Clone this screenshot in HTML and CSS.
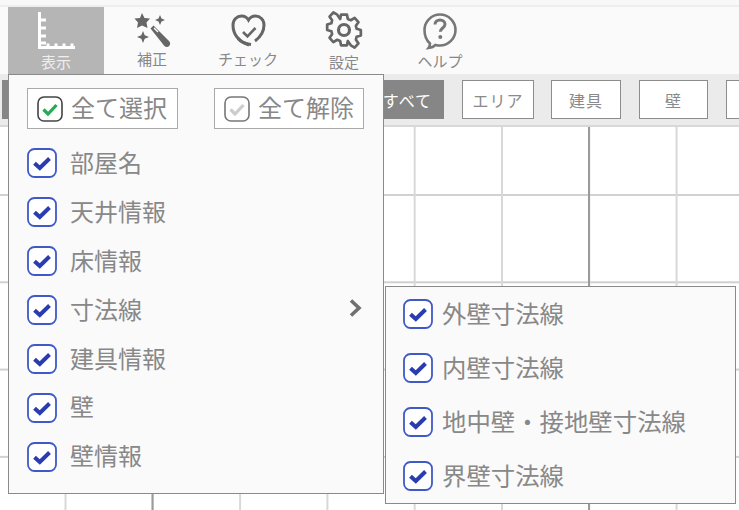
FILE: index.html
```html
<!DOCTYPE html>
<html lang="ja">
<head>
<meta charset="utf-8">
<title>表示</title>
<link rel="stylesheet" href="styles.css">
</head>
<body>
<svg class="defs" width="0" height="0" aria-hidden="true">
  <symbol id="chk" viewBox="0 0 30 30">
    <rect x="1" y="1" width="28" height="28" rx="6.5" fill="#fff" stroke="currentColor" stroke-width="1.8"/>
    <path d="M7.500 15.200 12.800 20 22.500 10.500" fill="none" stroke="#2a3db0" stroke-width="4" stroke-linejoin="miter"/>
  </symbol>
</svg>
<div class="app">
  <div class="topline"></div>
  <nav class="toolbar">
    <div class="tool active">
      <svg class="icon" width="48" height="44" viewBox="0 0 48 44"><path d="M7.500 3v35.500H43M7.500 11H14M7.500 19H14M7.500 27H14M7.500 34H14M16 38.500v-4M24 38.500v-4M32 38.500v-4M40 38.500v-4" fill="none" stroke="#fff" stroke-width="3"/></svg>
      <span class="label">表示</span>
    </div>
    <div class="tool">
      <svg class="icon" width="48" height="42" viewBox="0 0 48 42" fill="#666"><path d="M14 3l2.500 5 5.500.5-3.500 4 1 5.500-5.500-2.500L9 18l1-5.500-3.500-4L12 8z"/><path d="M32 5l1.500 3.500L37 10l-3.500 1.500L32 15l-1.500-3.500L27 10l3.500-1.500z"/><path d="M15 21l1.700 4.300L21 27l-4.300 1.700L15 33l-1.700-4.300L9 27l4.300-1.700z"/><path d="M22.500 18.500l3-3L41 31c1.500 1.500 1.500 3.500.2 5-1.500 1.500-3.500 1.300-5-.2z"/><path d="M25.500 18.500l1-1 4 4-1 1z" fill="#fafafa"/></svg>
      <span class="label">補正</span>
    </div>
    <div class="tool">
      <svg class="icon" width="48" height="42" viewBox="0 0 48 42" fill="none" stroke="#666" stroke-width="3"><path d="M25 35C14 31 9 24 9 15 9 9.500 13 6 17.500 6c3 0 5.500 1.500 7 4 1.500-2.500 4-4 7-4C36 6 40 9.500 40 15c0 6.500-3 11.500-9 16"/><path d="M14 28.500c3 3.500 8 5.500 13 6" /><path d="M19 22l4.500 4.500L31.500 18" stroke-width="2.600"/></svg>
      <span class="label">チェック</span>
    </div>
    <div class="tool tool-low">
      <svg class="icon" width="48" height="42" viewBox="0 0 48 42" fill="none" stroke="#666" stroke-width="3.200" stroke-linejoin="round"><path d="M20.500 4h7l1 5 3.500 1.500 4.500-2.700 4.500 5-3 4.200.8 3.500 5 1.500v6.500l-5 1.500-.8 3.500 3 4.200-4.500 5-4.500-2.700L28.500 35l-1 5h-7l-1-5-3.500-1.500-4.500 2.700-4.500-5 3-4.200-.8-3.500-5-1.500v-6.500l5-1.500.8-3.500-3-4.200 4.500-5 4.500 2.700L19.500 9z" transform="translate(3.600 1.300) scale(.85)"/><circle cx="24" cy="20" r="5.500"/></svg>
      <span class="label">設定</span>
    </div>
    <div class="tool">
      <svg class="icon" width="48" height="44" viewBox="0 0 48 44" fill="none" stroke="#777" stroke-width="2.600"><path d="M14 33.500C10.500 30.500 8.500 25.500 8.500 20 8.500 11.500 15.500 4.500 24 4.500S39.500 11.500 39.500 20 32.500 35.500 24 35.500c-1.500 0-3-.2-4.500-.6-1.500 1.700-4 2.800-7 3.100 1-1.300 1.500-2.800 1.500-4.500z"/><path d="M19 14.500c0-2.700 2.300-4.500 5-4.500s5 1.800 5 4.300c0 3.700-4.700 3.700-4.700 7.500" stroke-width="3"/><circle cx="24.300" cy="27" r="2" fill="#777" stroke="none"/></svg>
      <span class="label">ヘルプ</span>
    </div>
  </nav>
  <div class="filters">
    <span class="chip chip-all">すべて</span>
    <span class="chip chip-area">エリア</span>
    <span class="chip chip-fix">建具</span>
    <span class="chip chip-wall">壁</span>
    <span class="chip chip-more"></span>
  </div>
  <div class="canvas"></div>
</div>

<div class="menu">
  <div class="menu-actions">
    <div class="action">
      <svg class="mini" width="26" height="26" viewBox="0 0 26 26"><rect x="1" y="1" width="24" height="24" rx="6" fill="#fff" stroke="#444" stroke-width="1.600"/><path d="M6.500 13.500 11 18l8.500-9" fill="none" stroke="#22ab50" stroke-width="3.200"/></svg>
      <span>全て選択</span>
    </div>
    <div class="action">
      <svg class="mini" width="26" height="26" viewBox="0 0 26 26"><rect x="1" y="1" width="24" height="24" rx="6" fill="#fff" stroke="#777" stroke-width="1.600"/><path d="M6.500 13.500 11 18l8.500-9" fill="none" stroke="#ccc" stroke-width="3.200"/></svg>
      <span>全て解除</span>
    </div>
  </div>
  <ul class="list">
    <li class="row"><svg class="box"><use href="#chk"/></svg>部屋名</li>
    <li class="row"><svg class="box"><use href="#chk"/></svg>天井情報</li>
    <li class="row"><svg class="box"><use href="#chk"/></svg>床情報</li>
    <li class="row"><svg class="box"><use href="#chk"/></svg>寸法線
      <svg class="chevron" width="14" height="20" viewBox="0 0 14 20"><path d="M2 2.500 10 10l-8 7.500" fill="none" stroke="#707070" stroke-width="3.600"/></svg>
    </li>
    <li class="row"><svg class="box"><use href="#chk"/></svg>建具情報</li>
    <li class="row"><svg class="box"><use href="#chk"/></svg>壁</li>
    <li class="row"><svg class="box"><use href="#chk"/></svg>壁情報</li>
  </ul>
</div>

<ul class="submenu">
  <li class="subrow"><svg class="box"><use href="#chk"/></svg>外壁寸法線</li>
  <li class="subrow"><svg class="box"><use href="#chk"/></svg>内壁寸法線</li>
  <li class="subrow"><svg class="box"><use href="#chk"/></svg>地中壁・接地壁寸法線</li>
  <li class="subrow"><svg class="box"><use href="#chk"/></svg>界壁寸法線</li>
</ul>
</body>
</html>
```
FILE: styles.css
```css
* { box-sizing: border-box; }
html, body { margin: 0; height: 100%; overflow: hidden; }
body {
  position: relative;
  background: #fff;
  font-family: "Noto Sans CJK JP", "Noto Sans", sans-serif;
  color: #888;
}
.defs { position: absolute; }
.app { display: flex; flex-direction: column; height: 510px; }
.topline { height: 7px; background: #f8f8f8; border-bottom: 2px solid #eeeeee; }

.toolbar { display: flex; height: 67px; padding-left: 8px; background: #fafafa; }
.tool {
  width: 96px;
  display: flex;
  flex-direction: column;
  align-items: center;
  color: #888;
}
.tool .icon { display: block; flex: none; margin-top: 3px; }
.tool .label { font-size: 15px; line-height: 18px; margin-top: -2px; white-space: nowrap; }
.tool.active { background: #b5b5b5; color: #eee; }
.tool.active .icon { margin-top: 2px; }
.tool.active .label { margin-top: 0; }
.tool-low .label { margin-top: 1px; }

.filters {
  display: flex;
  height: 53px;
  padding: 6px 0 0 2px;
  background: #ebebeb;
  border-bottom: 2px solid #d8d8d8;
  overflow: hidden;
}
.chip {
  height: 39px;
  flex: none;
  display: flex;
  align-items: center;
  justify-content: center;
  font-size: 16px;
  background: #fff;
  border: 1px solid #8c8c8c;
  color: #8a8a8a;
  letter-spacing: 1px;
}
.chip-all { width: 442px; justify-content: flex-end; padding-right: 11px; background: #868686; border-color: #868686; color: #fff; }
.chip-area { width: 72px; margin-left: 18px; }
.chip-fix { width: 70px; margin-left: 17px; }
.chip-wall { width: 69px; margin-left: 18px; }
.chip-more { width: 40px; margin-left: 18px; }

.canvas {
  flex: 1;
  background-color: #fff;
  background-image:
    linear-gradient(90deg, #9a9a9a 2px, transparent 2px),
    linear-gradient(90deg, #d8d8d8 2px, transparent 2px),
    linear-gradient(180deg, #d0d0d0 2px, transparent 2px);
  background-size: 436.500px 100%, 87.300px 100%, 100% 87.300px;
  background-position: 151.500px 0, 64.500px 0, 0 67px;
}

.menu {
  position: absolute;
  left: 8px;
  top: 74px;
  width: 376px;
  height: 420px;
  background: #fafafa;
  border: 1px solid #8a8a8a;
}
.menu-actions { display: flex; justify-content: space-between; padding: 13px 19px 0 18px; }
.action {
  width: 151px;
  height: 41px;
  display: flex;
  align-items: center;
  gap: 8px;
  padding-left: 9px;
  background: #fff;
  border: 1px solid #aaa;
  font-size: 24px;
  line-height: 1;
}
.action span { white-space: nowrap; margin-top: -4px; }
.mini { flex: none; }
.action:last-child { width: 150px; }

.list { list-style: none; margin: 0; padding: 0; position: absolute; top: 62px; left: 0; right: 0; }
.row, .subrow {
  display: flex;
  align-items: center;
  font-size: 24px;
  white-space: nowrap;
}
.row { height: 48.900px; padding-left: 18px; }
.box { width: 30px; height: 30px; flex: none; margin: 4px 13px 0 0; color: #3f59c6; }
.chevron { margin-left: auto; margin-right: 20px; }

.submenu {
  position: absolute;
  left: 385px;
  top: 286px;
  width: 351px;
  height: 218px;
  margin: 0;
  padding: 0 0 0 17px;
  list-style: none;
  background: #fafafa;
  border: 1px solid #8a8a8a;
}
.subrow { height: 54px; padding-bottom: 4px; font-size: 24.400px; }
.subrow .box { margin: 4px 9px 0 0; }
```
